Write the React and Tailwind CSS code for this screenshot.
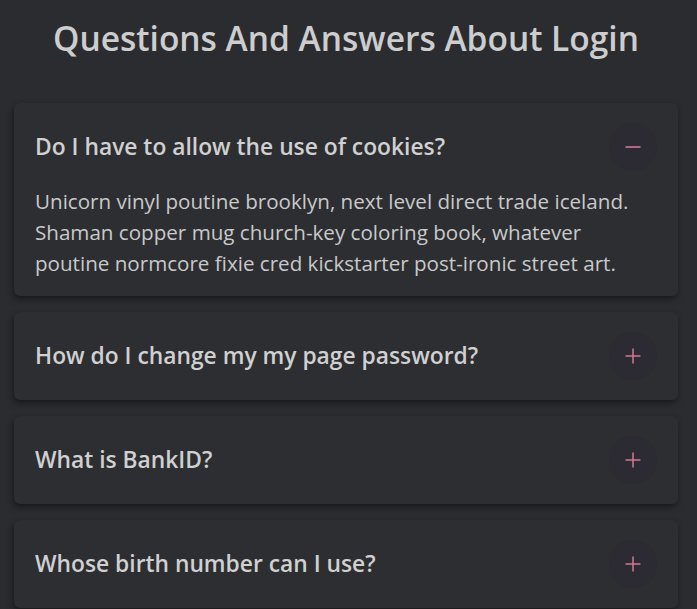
import React, { useState } from 'react';

const faqs = [
  {
    q: 'Do I have to allow the use of cookies?',
    a: 'Unicorn vinyl poutine brooklyn, next level direct trade iceland. Shaman copper mug church-key coloring book, whatever poutine normcore fixie cred kickstarter post-ironic street art.',
  },
  {
    q: 'How do I change my my page password?',
    a: 'Unicorn vinyl poutine brooklyn, next level direct trade iceland.',
  },
  {
    q: 'What is BankID?',
    a: 'Unicorn vinyl poutine brooklyn, next level direct trade iceland.',
  },
  {
    q: 'Whose birth number can I use?',
    a: 'Unicorn vinyl poutine brooklyn, next level direct trade iceland.',
  },
];

export default function App() {
  const [open, setOpen] = useState(0);

  return (
    <div
      className="min-h-screen bg-[#2b2c2f] pl-[14px] pr-[19px] pt-[18px] pb-10"
      style={{ fontFamily: '"Open Sans", "Noto Sans", sans-serif' }}
    >
      <h1 className="text-center text-[33.5px] font-semibold text-[#cdcdcd] leading-[40px]">
        Questions And Answers About Login
      </h1>

      <div className="mt-[45px] flex flex-col gap-4">
        {faqs.map((item, i) => (
          <FaqItem
            key={item.q}
            item={item}
            isOpen={open === i}
            onToggle={() => setOpen(open === i ? -1 : i)}
          />
        ))}
      </div>
    </div>
  );
}

function FaqItem({ item, isOpen, onToggle }) {
  return (
    <div className="rounded-md bg-[#2d2e31] shadow-[-1px_3px_6px_rgba(0,0,0,0.45)]">
      <button
        onClick={onToggle}
        className="flex w-full items-center justify-between py-5 pl-[21px] pr-[21px] text-left"
      >
        <span className="text-[22.8px] font-semibold text-[#d0d0d0]">{item.q}</span>
        <span className="flex h-12 w-12 items-center justify-center rounded-full bg-[#2c2a32]">
          {isOpen ? (
            <svg width="18" height="18" viewBox="0 0 18 18">
              <path d="M1.5 9h15" stroke="#d07a92" strokeWidth="1.6" />
            </svg>
          ) : (
            <svg width="18" height="18" viewBox="0 0 18 18">
              <path d="M1.5 9h15M9 1.5v15" stroke="#d07a92" strokeWidth="1.5" />
            </svg>
          )}
        </span>
      </button>
      {isOpen && (
        <p className="pl-[21px] pr-[40px] pb-[17px] -mt-[5px] text-[20.6px] leading-[31px] text-[#c9c9c9]">
          {item.a}
        </p>
      )}
    </div>
  );
}
